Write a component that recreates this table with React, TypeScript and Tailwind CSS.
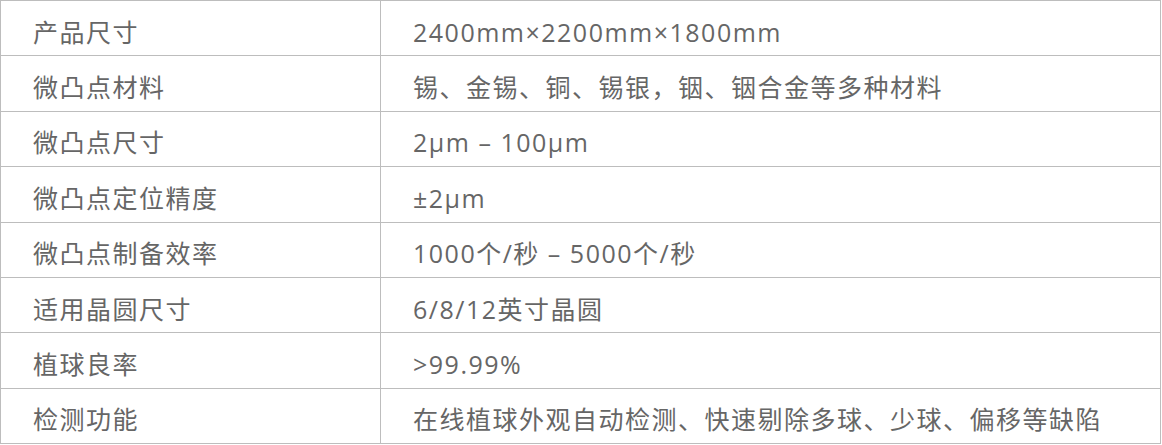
import React from "react";

const rows: [string, string][] = [
  ["产品尺寸", "2400mm×2200mm×1800mm"],
  ["微凸点材料", "锡、金锡、铜、锡银，铟、铟合金等多种材料"],
  ["微凸点尺寸", "2μm – 100μm"],
  ["微凸点定位精度", "±2μm"],
  ["微凸点制备效率", "1000个/秒 – 5000个/秒"],
  ["适用晶圆尺寸", "6/8/12英寸晶圆"],
  ["植球良率", ">99.99%"],
  ["检测功能", "在线植球外观自动检测、快速剔除多球、少球、偏移等缺陷"],
];

export default function App() {
  return (
    <div className="w-[1162px] h-[445px] bg-white">
      <table
        className="w-[1161px] border-collapse text-[#666] text-[25px] tracking-[1.5px]"
        style={{ fontFamily: '"Open Sans", "Noto Sans CJK SC", sans-serif' }}
      >
        <tbody>
          {rows.map(([k, v]) => (
            <tr key={k} className="h-[55.4px]">
              <td className="w-[380px] border border-[#bdbdbd] pl-8 pt-[8px] align-middle leading-none">
                {k}
              </td>
              <td className="border border-[#bdbdbd] pl-8 pt-[8px] align-middle leading-none">
                {v}
              </td>
            </tr>
          ))}
        </tbody>
      </table>
    </div>
  );
}
